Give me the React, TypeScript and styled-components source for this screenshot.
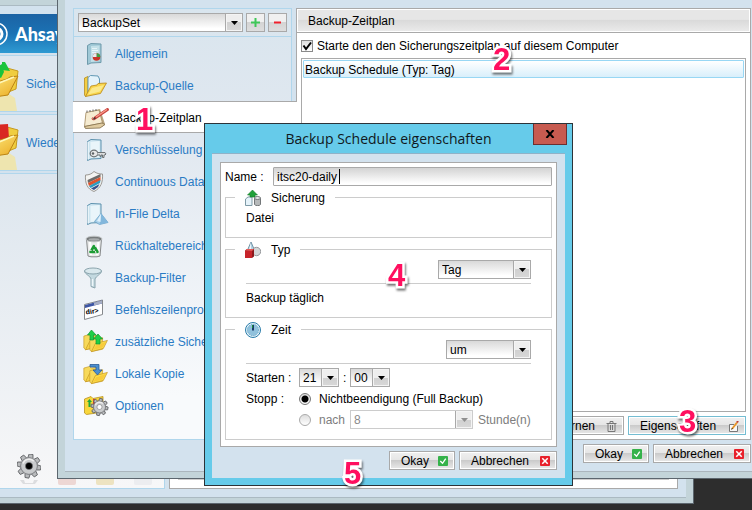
import React, { useId, useState } from "react";
import styled, { createGlobalStyle, css } from "styled-components";

const color = {
  frame: "#c3d4d9",
  frameEdge: "#5c666e",
  surface: "#d3e2ee",
  sky: "#b0d6ec",
  line: "#a9a9a9",
  softLine: "#cccccc",
  link: "#2a7bc4",
};

const GlobalStyle = createGlobalStyle`
  * { box-sizing: border-box; }
  body {
    margin: 0;
    background: #2d2d2d;
    color: #000;
    font: 12px/16px "Liberation Sans", Arial, sans-serif;
  }
  button, input, select { font: inherit; color: inherit; margin: 0; }
`;

const Desktop = styled.div`
  position: relative;
  min-height: 100vh;
  overflow: hidden;
`;

/* ---------- windows ---------- */

const MainWindow = styled.div`
  position: absolute;
  inset: -1px 58px 6px -60px;
  display: flex;
  padding: 5px 7px;
  border: 1px solid ${color.frameEdge};
  background: ${color.frame};
`;

const MainBody = styled.div`
  flex: 1;
  display: flex;
  flex-direction: column;
  gap: 2px;
  padding: 8px;
  background: ${color.surface};
  border: solid #abbac2;
  border-width: 1px 0;
`;

const Banner = styled.header`
  display: flex;
  align-items: center;
  gap: 7px;
  height: 39px;
  padding-left: 28px;
  background: linear-gradient(#1c63a4, #1b72b4 50%, #2e9ad2);
  color: #fff;
  font: 900 18px/24px Lato, sans-serif;
`;

const MainColumns = styled.div`
  flex: 1;
  display: grid;
  grid-template-columns: 209px 1fr;
  gap: 4px;
`;

const MainNav = styled.nav`
  display: flex;
  flex-direction: column;
  gap: 2px;
`;

const MainNavItem = styled.a`
  display: flex;
  align-items: center;
  gap: 7px;
  height: 57px;
  padding-left: 14px;
  border: 1px solid ${color.sky};
  background: #dee7ef;
  color: ${color.link};
  text-decoration: none;
  white-space: nowrap;
`;

const MainNavRest = styled.div`
  flex: 1;
  display: flex;
  align-items: flex-end;
  gap: 14px;
  padding-left: 60px;
  border: 1px solid ${color.sky};
  background: linear-gradient(#dde6ee, #f7f7f8);
`;

const MainContent = styled.div`
  display: flex;
  padding: 8px;
  border: 1px solid ${color.line};
  background: #fff;
`;

const MainContentList = styled.div`
  flex: 1;
  border: 1px solid ${color.softLine};
`;

const SettingsWindow = styled.div`
  position: absolute;
  isolation: isolate;
  inset: 0 -15px 31px 57px;
  display: flex;
  padding: 0 7px 6px;
  border: solid ${color.frameEdge};
  border-width: 0 1px 1px;
  background: ${color.frame};
`;

const SettingsBody = styled.div`
  flex: 1;
  display: flex;
  flex-direction: column;
  gap: 4px;
  padding: 8px;
  border-bottom: 1px solid #abb6bd;
  background: ${color.surface};
`;

const SettingsColumns = styled.div`
  flex: 1;
  display: grid;
  grid-template-columns: 219px 1fr;
  gap: 4px;
`;

/* ---------- sidebar ---------- */

const Sidebar = styled.aside`
  border: 1px solid ${color.sky};
  background: linear-gradient(#d9e5ee, #e1e8f0 30%, #f8fafc 90%);
`;

const SetPicker = styled.div`
  display: flex;
  align-items: center;
  gap: 3px;
  height: 28px;
  padding: 0 4px;
  border-bottom: 1px solid ${color.sky};
`;

const Tab = styled.a<{ $active?: boolean }>`
  position: relative;
  display: flex;
  align-items: center;
  gap: 8px;
  height: 32px;
  padding: 2px 0 0 9px;
  color: ${color.link};
  text-decoration: none;
  white-space: nowrap;
  svg { flex: none; overflow: visible; }
  ${(p) =>
    p.$active &&
    css`
      z-index: 1;
      margin: 0 -6px 0 -1px;
      border: solid ${color.line};
      border-width: 1px 0;
      padding-left: 10px;
      background: #fff;
      color: #000;
    `}
`;

/* ---------- controls ---------- */

const bevel = css`
  background: linear-gradient(#f0f0f0, #e6e6e6 45%, #cbcbcb 50%, #e9e9e9);
  box-shadow: inset 0 0 0 1px #fff;
`;

const Button = styled.button<{ $width: number; $focused?: boolean }>`
  display: flex;
  align-items: center;
  justify-content: space-between;
  min-width: ${(p) => p.$width}px;
  height: 19px;
  padding: 1px 6px 0 11px;
  border: 1px solid ${(p) => (p.$focused ? "#74bdd2" : color.line)};
  white-space: nowrap;
  ${bevel}
`;

const SquareButton = styled.button<{ $tint: string }>`
  display: grid;
  place-items: center;
  width: 19px;
  height: 19px;
  padding: 0;
  border: 1px solid ${color.line};
  color: ${(p) => p.$tint};
  background: linear-gradient(#f0f0f0 50%, #d4d4d4 50%, #dedede);
`;

const ComboBox = styled.div<{ $width?: number }>`
  display: grid;
  grid-template-columns: 1fr 17px;
  flex: ${(p) => (p.$width ? "none" : "1")};
  width: ${(p) => (p.$width ? `${p.$width}px` : "auto")};
  height: 19px;
  border: 1px solid ${color.line};
  background: linear-gradient(#d9d9d9, #fff 85%);
  &:has(select:disabled) {
    border-color: ${color.softLine};
    background: #fff;
    color: #8a8a8a;
  }
`;

const ComboSelect = styled.select`
  grid-area: 1 / 1 / 2 / 3;
  appearance: none;
  min-width: 0;
  padding: 1px 0 0 3px;
  border: 0;
  background: none;
  &:disabled { opacity: 1; color: #8a8a8a; }
`;

const ComboArrow = styled.span`
  grid-area: 1 / 2;
  display: grid;
  place-items: center;
  pointer-events: none;
  border-left: 1px solid ${color.line};
  background: linear-gradient(#eee 50%, #d0d0d0 50%, #d8d8d8);
  box-shadow: inset 0 0 0 1px #f4f4f4;
`;

const Check = styled.input`
  appearance: none;
  width: 12px;
  height: 12px;
  border: 1px solid #8a8a8a;
  background: linear-gradient(#ddd, #fff);
  &:checked {
    background: url("data:image/svg+xml,%3Csvg xmlns='http://www.w3.org/2000/svg' viewBox='0 0 10 10'%3E%3Cpath d='M1.5 4.5 4 8 9 1.5' fill='none' stroke='%23000' stroke-width='2'/%3E%3C/svg%3E")
      center / 10px 10px, linear-gradient(#ddd, #fff);
  }
`;

const Radio = styled.input`
  appearance: none;
  width: 12px;
  height: 12px;
  border: 1px solid #777;
  border-radius: 50%;
  background: linear-gradient(#ddd, #fff);
  &:checked {
    background: radial-gradient(circle, #000 3px, transparent 4px), linear-gradient(#ddd, #fff);
  }
  &:disabled { border-color: #aaa; }
`;

const TextBox = styled.input`
  flex: 1;
  min-width: 0;
  height: 19px;
  padding: 1px 3px 0;
  border: 1px solid ${color.line};
  border-radius: 1px;
  outline: none;
  caret-color: transparent;
  background:
    linear-gradient(#000, #000) 65px center / 1px 15px no-repeat,
    linear-gradient(#d3d3d3, #fff 90%);
`;

/* ---------- settings content ---------- */

const Panel = styled.section`
  display: flex;
  flex-direction: column;
  border: 1px solid ${color.line};
  background: #fff;
`;

const PanelTitle = styled.h1`
  height: 24px;
  margin: 0;
  padding-left: 11px;
  border-bottom: 1px solid ${color.line};
  background: linear-gradient(#e6e6e6 45%, #dadada 50%, #ebebeb);
  box-shadow: inset 0 0 0 1px #fff;
  font: inherit;
  line-height: 24px;
`;

const EnableRow = styled.label`
  display: flex;
  align-items: center;
  gap: 4px;
  height: 25px;
  padding: 1px 0 0 4px;
`;

const ScheduleList = styled.ul`
  flex: 1;
  margin: 0 4px;
  padding: 1px;
  border: 1px solid ${color.line};
  list-style: none;
`;

const ScheduleRow = styled.li`
  height: 18px;
  padding-left: 1px;
  border: 1px solid #98d7f4;
  border-radius: 1px;
  background: linear-gradient(#fff, #d9effb);
  line-height: 18px;
`;

const ButtonRow = styled.div<{ $pad?: boolean }>`
  display: flex;
  justify-content: flex-end;
  gap: 4px;
  padding: ${(p) => (p.$pad ? "4px" : "0")};
`;

/* ---------- dialog ---------- */

const Dialog = styled.div`
  position: absolute;
  left: 204px;
  top: 123px;
  width: 369px;
  padding: 0 7px 7px;
  border: 1px solid #2c3338;
  background: #66cbea;
`;

const DialogTitleBar = styled.header`
  display: grid;
  grid-template-columns: 1fr;
  height: 29px;
  margin: 0 -2px;
`;

const DialogTitle = styled.h2`
  grid-area: 1 / 1;
  margin: 0;
  color: #101820;
  font: 14px/29px "Open Sans", sans-serif;
  text-align: center;
`;

const CloseButton = styled.button`
  grid-area: 1 / 1;
  justify-self: end;
  display: grid;
  place-items: center;
  width: 34px;
  height: 21px;
  padding: 0;
  border: 1px solid #6b2f30;
  border-top: 0;
  background: #c75b50;
`;

const DialogBody = styled.form`
  display: flex;
  flex-direction: column;
  gap: 4px;
  padding: 8px;
  border-top: 1px solid #8fb2c8;
  background: ${color.surface};
`;

const DialogPanel = styled.div`
  display: flex;
  flex-direction: column;
  gap: 2px;
  padding: 4px 4px 6px;
  border: 1px solid ${color.line};
  background: #fff;
`;

const NameRow = styled.label`
  display: grid;
  grid-template-columns: 48px 1fr;
  align-items: center;
`;

const Group = styled.fieldset`
  min-width: 0;
  margin: 0;
  padding: 2px 20px 10px;
  border: 1px solid ${color.softLine};
`;

const GroupLegend = styled.legend`
  display: flex;
  align-items: center;
  gap: 10px;
  height: 18px;
  margin-left: -11px;
  padding: 2px 10px 0;
`;

const GroupText = styled.p`
  margin: 0;
  line-height: 20px;
  height: 19px;
`;

const SelectRow = styled.div`
  display: flex;
  justify-content: flex-end;
`;

const Rule = styled.hr`
  margin: 4px 0;
  border: 0;
  border-top: 1px solid ${color.softLine};
`;

const TimeGrid = styled.div`
  display: grid;
  grid-template-columns: 53px 1fr;
  grid-auto-rows: 19px;
  row-gap: 2px;
  align-items: center;
`;

const TimeCell = styled.div<{ $gap: number; $muted?: boolean }>`
  grid-column: 2;
  display: flex;
  align-items: center;
  gap: ${(p) => p.$gap}px;
  white-space: nowrap;
  color: ${(p) => (p.$muted ? "#7d7d7d" : "inherit")};
`;

const RadioLabel = styled.label`
  display: flex;
  align-items: center;
  gap: 8px;
`;

const StepMark = styled.span<{ $x: number; $y: number }>`
  position: absolute;
  left: ${(p) => p.$x}px;
  top: ${(p) => p.$y}px;
  color: #ff0f5f;
  font: bold 31px/32px "Liberation Sans", Arial, sans-serif;
  -webkit-text-stroke: 5px #fff;
  paint-order: stroke fill;
  filter: drop-shadow(1px 2px 1px rgba(0, 0, 0, 0.55));
  pointer-events: none;
`;

/* ---------- drawings ---------- */

const Folder = ({ x = 0, y = 0, s = 1 }: { x?: number; y?: number; s?: number }) => (
  <g transform={`translate(${x} ${y}) scale(${s})`}>
    <path d="M1 6 8 4l2 2 7-1v14L3 22 1 20z" fill="#f7d95a" stroke="#c59a27" strokeWidth=".8" />
    <path d="M3 22 8 12l15-4-5 10z" fill="#fbe04c" stroke="#c08c1a" strokeWidth=".8" />
    <path d="M5 20 9 14l12-4-4 7z" fill="#f5b92e" opacity=".55" />
  </g>
);

const Page = () => (
  <>
    <path d="M4.500 3.500 8 1.500l10 .5v18.500l-10 .5-3.500 1.500z" fill="#cfe6f1" stroke="#5c91ad" />
    <path d="M7.500 4 16.500 3v16l-9 1z" fill="#e9f5fa" />
    <path d="M5 4v17.500" stroke="#fff" />
  </>
);

const Gear = ({ cx, cy, r, hole = "#fff" }: { cx: number; cy: number; r: number; hole?: string }) => (
  <g transform={`translate(${cx} ${cy})`}>
    {Array.from({ length: 8 }, (_, i) => (
      <path
        key={i}
        transform={`rotate(${i * 45 + 10})`}
        d={`M${-r * 0.22} ${-r * 0.65} L${-r * 0.16} ${-r} H${r * 0.16} L${r * 0.22} ${-r * 0.65}z`}
        fill="#b9bbbd"
        stroke="#636568"
        strokeWidth=".9"
      />
    ))}
    <circle r={r * 0.7} fill="#c4c6c8" stroke="#77797c" strokeWidth=".8" />
    <circle r={r * 0.6} fill="#c9cbcd" />
    <path d={`M${-r * 0.5} ${-r * 0.2}A${r * 0.54} ${r * 0.54} 0 0 1 ${r * 0.4} ${-r * 0.4}`} fill="none" stroke="#eee" strokeWidth="1.500" />
    <circle r={r * 0.3} fill={hole} stroke="#77797c" strokeWidth=".6" />
  </g>
);

const tabIcons: Record<string, React.ReactNode> = {
  general: (
    <>
      <path d="M4.500 3.500 8 1.500l10 .5v18.500l-10 .5-3.500 1.500z" fill="#9fc8d6" stroke="#6f9aab" />
      <path d="M8 4 16.500 3.500v15.500L8 20z" fill="#c3e0e8" />
      <path d="M9 6.500h5M9 8.500h6M9 10.500h4" stroke="#e6f4f8" />
      <circle cx="13.500" cy="15" r="3.800" fill="#c93428" />
      <path d="M13.500 15v-3.800a3.800 3.800 0 0 1 3.800 3.800z" fill="#3da044" />
      <path d="M13.500 15H9.700a3.800 3.800 0 0 1 3.800-3.800z" fill="#e6ebee" />
    </>
  ),
  source: (
    <>
      <path d="M1.500 4 5 2.500v18L2.500 22.500l-1-1.500z" fill="#f4cd42" stroke="#b88d20" strokeWidth=".8" />
      <path d="M5 3.500 7.500 1.500 15 2l1.500 3v14L5 20z" fill="#e4f3fb" stroke="#6299b5" />
      <path d="M2.500 22.500 8 12l6-1 1-1.500 8.500-.5-6 10.500z" fill="#f9d54a" stroke="#b8861b" strokeWidth=".8" />
      <path d="M5 20.500 9 14l12-3-4 6.500z" fill="#fbe98c" />
    </>
  ),
  schedule: (
    <>
      <path d="M3 7 17 3l5 15-3 3L1.500 22z" fill="#b9a681" />
      <path d="M3 6.500 16 4l3.500 13L1.500 20.500z" fill="#f6ecd2" stroke="#a48b62" strokeWidth=".8" />
      <path d="M1.500 20.500 19 17l3 1.500-5 3.500-14.500.5z" fill="#dfcba0" stroke="#83704d" strokeWidth=".8" />
      <path d="M4 6.500v-2M7 6V4M10 5.500v-2M13 5V3" stroke="#666" />
      <path d="M10 11.500c-2 1-1 3 2 2" stroke="#cf3b35" fill="none" />
      <path d="M12 12 24.500 3.500" stroke="#c9423d" strokeWidth="3" strokeLinecap="round" />
      <path d="M13 11 24 3.500" stroke="#f79a8b" strokeWidth="1.500" />
      <path d="m9.500 13.500 2-2.500 1.500 2z" fill="#4a3632" />
    </>
  ),
  encryption: (
    <>
      <Page />
      <ellipse cx="11" cy="15.500" rx="3.800" ry="3.300" fill="#e8e8e8" stroke="#6d7275" strokeWidth="1.300" />
      <circle cx="10" cy="15.500" r="1.200" fill="#5d6265" />
      <path d="M14.500 14.500H22l1 1.500-1 1h-1v2.500h-1.500V17H18v1.500h-1V17h-2.500" fill="#dadcdd" stroke="#6d7275" />
    </>
  ),
  shield: (
    <>
      <path d="M11 1.500c3 2 5 2.500 8.500 2.500C20 12 18 18 11 21.500 4 19 2 13 2.500 5 6 5 8.500 4 11 1.500z" fill="#f3f3f1" stroke="#9b9894" />
      <path d="m4.500 10 13-6v3L5 13z" fill="#6d6a69" />
      <path d="m5 13 12.500-6v3.500L6 16z" fill="#e0532e" />
      <path d="M6 16 17.500 10l-.5 3L7.500 18z" fill="#2b9bc1" />
      <path d="m8 18.500 8.500-4.500-1.500 3-4 3z" fill="#34528e" />
    </>
  ),
  delta: (
    <>
      <Page />
      <path d="m18 11.500-6.500 8 5 3 8.500-2z" fill="#a9d0e9" stroke="#6ba2c6" strokeWidth=".8" />
      <path d="m18 11.500-1.500 11L25 20.500z" fill="#82b7dc" />
      <path d="m18 11.500-4 7.500 3.500 1z" fill="#e0f1fb" />
    </>
  ),
  bin: (
    <>
      <path d="M3.500 5h15l-1.500 17-3 .8H8L5 22z" fill="#ebecec" stroke="#858889" />
      <path d="M6 7h2l1 14H7zM14.500 7h2L15 21h-2z" fill="#fff" />
      <ellipse cx="11" cy="5" rx="8" ry="2.800" fill="#777b7c" stroke="#bfc3c4" />
      <ellipse cx="11" cy="5.500" rx="5.500" ry="1.300" fill="#a8acad" />
      <path d="M11 12 14.500 18h-7z" fill="none" stroke="#1c9c34" strokeWidth="2.600" strokeLinejoin="round" />
      <path d="m12 10.500 1 2.500M6.500 16l2 .5M13 19.500l-.5-2.500" stroke="#ebecec" />
    </>
  ),
  filter: (
    <>
      <path d="M1.500 5c0 3 6 5 6.500 8v7.500l4 1.500v-9c1-3 6.500-5 6.500-8z" fill="#c3d9e0" stroke="#8aa4ad" />
      <ellipse cx="10" cy="5" rx="8.500" ry="3" fill="#d9e8ed" stroke="#8aa4ad" />
      <path d="M9.500 13v7" stroke="#eef6f9" strokeWidth="1.500" />
    </>
  ),
  command: (
    <>
      <path d="M1.500 6.500 19.500 2v14.500l-18 5z" fill="#fff" stroke="#85888c" />
      <path d="M2 7 19 2.500v3L2 10z" fill="#3e57a5" />
      <path d="M11 4.700 19 2.500v3l-8 2z" fill="#a9b0c5" />
      <text x="3" y="16.500" transform="rotate(-8 3 16.500)" fontFamily="Liberation Sans, sans-serif" fontSize="7" fontWeight="bold">dir&gt;</text>
    </>
  ),
  extra: (
    <>
      <Folder x={0} y={1} s={0.85} />
      <Folder x={6} y={4} s={0.8} />
      <path d="M8.500 0 13 5h-2.500v5H7V5H4.500zM15 4l4.500 5H17v5h-4V9h-2.500z" fill="#1fcf46" stroke="#149732" strokeWidth=".7" />
    </>
  ),
  local: (
    <>
      <Folder x={0} y={1} s={0.85} />
      <Folder x={6} y={4} s={0.8} />
      <path d="M7 5V2.500h9V8h3l-4.500 5L10 8h3V5z" fill="#4a8fd0" stroke="#285b98" strokeWidth=".8" />
    </>
  ),
  options: (
    <>
      <path d="M1.500 5 8 2.500l2 2L20 2.500V18L3.500 20.500l-2-1.500z" fill="#f8d63c" stroke="#b8901e" strokeWidth=".8" />
      <path d="M6.500 5 9 8H7.500v5h-2V8H4z" fill="#1faa3c" />
      <path d="M11 5v5" stroke="#d9392c" strokeWidth="2" />
      <Gear cx={16.500} cy={13} r={8.500} />
    </>
  ),
};

const groupIcons: Record<string, React.ReactNode> = {
  backup: (
    <>
      <path d="M.5 9 3 7h4v8.500H.5z" fill="#e6f3fa" stroke="#7e9aa6" />
      <path d="M9.500 8v6.500c1 1.500 5.500 1.500 6 0V8" fill="#b6b9ba" stroke="#737779" />
      <ellipse cx="12.500" cy="8" rx="3" ry="1.500" fill="#e3e5e6" stroke="#737779" />
      <path d="m7.500 0 5 5H10v2H5V5H2.500z" fill="#20a13a" stroke="#15782a" strokeWidth=".6" />
    </>
  ),
  type: (
    <>
      <path d="M6 0 2.500 8h7z" fill="#b4d2e2" stroke="#587f94" strokeWidth=".8" />
      <path d="M6 0v8H4z" fill="#eff8fc" />
      <circle cx="11.500" cy="9.500" r="4.200" fill="#d4d6d8" stroke="#85888b" strokeWidth=".8" />
      <path d="M0 8.500 2 7h7v7.500L7 16H0z" fill="#8d191d" />
      <path d="M0 9h7v7H0z" fill="#c7242a" />
      <path d="M0 8.500 2 7h7L7 9z" fill="#e55a58" />
    </>
  ),
  time: (
    <>
      <circle cx="8" cy="8" r="7.500" fill="#e8f5fb" stroke="#287ba9" />
      <circle cx="8" cy="8" r="5.700" fill="#90c1dc" stroke="#5f9fc2" strokeDasharray="1 1" />
      <path d="M8 3v5.500" stroke="#1b3c6d" strokeWidth="2" />
      <path d="M7.500 3v3" stroke="#1d8b35" />
    </>
  ),
};

const GroupIcon = ({ name }: { name: string }) => (
  <svg width="16" height="16" viewBox="0 0 16 16" aria-hidden="true">{groupIcons[name]}</svg>
);

const OkIcon = () => (
  <svg width="10" height="10" viewBox="0 0 11 11" aria-hidden="true">
    <rect width="11" height="11" rx="1" fill="#35b24a" />
    <path d="M2.500 5.500 5 8l3.500-5" fill="none" stroke="#fff" strokeWidth="1.500" />
  </svg>
);

const CancelIcon = () => (
  <svg width="10" height="10" viewBox="0 0 11 11" aria-hidden="true">
    <rect width="11" height="11" rx="1" fill="#e8202a" />
    <path d="m2.500 2.500 6 6m0-6-6 6" stroke="#fff" strokeWidth="1.700" />
  </svg>
);

const TrashIcon = () => (
  <svg width="11" height="11" viewBox="0 0 11 11" aria-hidden="true">
    <path d="M.5 2.500h10M4 2V.5h3V2M2 3v7.500h7V3M4.500 4v5M6.500 4v5" fill="none" stroke="#777" />
  </svg>
);

const EditIcon = () => (
  <svg width="11" height="11" viewBox="0 0 11 11" aria-hidden="true">
    <path d="M9.500 5v5.500h-8v-7H6" fill="#f8f8f8" stroke="#777" />
    <path d="m4 8 5-6.500" stroke="#e8962a" strokeWidth="2" />
    <path d="m9 1.500 1-1.500" stroke="#c03b30" strokeWidth="2" />
    <path d="m3.500 8.500 1-1.500" stroke="#333" />
  </svg>
);

const BigFolder = ({ arrow, id }: { arrow: string; id: string }) => (
  <svg width="48" height="55" viewBox="0 0 48 55" aria-hidden="true">
    <defs>
      <linearGradient id={id} x1="0" y1="0" x2="1" y2="1">
        <stop offset="0" stopColor="#fff08a" />
        <stop offset="1" stopColor="#e9a61a" />
      </linearGradient>
    </defs>
    <path d="M8 55V42l30-4 6 4 2 13z" fill="#f8e583" opacity=".6" />
    <path d="M10 18 36 12l11 3-2 18-30 12z" fill="#f0cd3f" stroke="#c79b20" />
    {arrow === "up" ? (
      <path d="m25 12 6-4 2 8-3 6-5-2z" fill="#19c43c" />
    ) : (
      <path d="m24 10 13-1 1 14-8 7-8-4z" fill="#d92722" />
    )}
    {arrow === "up" && <path d="m31 6 3 0 5 9-8-1z" fill="#19c43c" />}
    <path d="m10 43 16-17 10-3 3-2 8-1-10 19z" fill={`url(#${id})`} stroke="#bb8413" />
    <path d="m14 41 14-14 15-6" fill="none" stroke="#fff7b8" strokeWidth="1.500" />
  </svg>
);

const BannerMark = () => (
  <svg width="24" height="24" viewBox="0 0 24 24" aria-hidden="true">
    <circle cx="12" cy="12" r="11" fill="none" stroke="#fff" strokeWidth="1.500" />
    <circle cx="12" cy="12" r="6" fill="none" stroke="#fff" strokeWidth="3" />
  </svg>
);

const DockGear = () => (
  <svg width="24" height="34" viewBox="0 0 24 34" aria-hidden="true">
    <path d="M3 26h4l1 3h8l1-3h4l-3 4H6z" fill="#b4b6b8" opacity=".4" />
    <Gear cx={12} cy={12} r={12} hole="#000" />
  </svg>
);

const DockIcon = ({ body, tint }: { body: string; tint: string }) => (
  <svg width="24" height="34" viewBox="0 0 24 34" aria-hidden="true">
    <rect x="2" y="3" width="20" height="20" rx="3" fill={body} />
    <rect x="3" y="23" width="18" height="8" rx="2" fill={tint} opacity=".5" />
  </svg>
);

/* ---------- composed pieces ---------- */

function Combo({ label, options, width, disabled, id }: {
  label?: string; options: string[]; width?: number; disabled?: boolean; id?: string;
}) {
  return (
    <ComboBox $width={width}>
      <ComboSelect aria-label={label} id={id} disabled={disabled} defaultValue={options[0]}>
        {options.map((o) => <option key={o}>{o}</option>)}
      </ComboSelect>
      <ComboArrow>
        <svg width="7" height="4" viewBox="0 0 7 4" aria-hidden="true">
          <path d="M0 0h7L3.500 4z" fill={disabled ? "#8f8f8f" : "#000"} />
        </svg>
      </ComboArrow>
    </ComboBox>
  );
}

const tabs = [
  ["general", "Allgemein"],
  ["source", "Backup-Quelle"],
  ["schedule", "Backup-Zeitplan"],
  ["encryption", "Verschlüsselung"],
  ["shield", "Continuous Data Protection"],
  ["delta", "In-File Delta"],
  ["bin", "Rückhaltebereich"],
  ["filter", "Backup-Filter"],
  ["command", "Befehlszeilenprogramm"],
  ["extra", "zusätzliche Sicherung"],
  ["local", "Lokale Kopie"],
  ["options", "Optionen"],
];

function PropertiesDialog() {
  const [name, setName] = useState("itsc20-daily");
  const startId = useId();
  return (
    <Dialog role="dialog" aria-label="Backup Schedule eigenschaften">
      <DialogTitleBar>
        <DialogTitle>Backup Schedule eigenschaften</DialogTitle>
        <CloseButton type="button" aria-label="Schließen">
          <svg width="10" height="8" viewBox="0 0 10 8" aria-hidden="true">
            <path d="m1.500 0 7 8m0-8-7 8" stroke="#000" strokeWidth="2" />
          </svg>
        </CloseButton>
      </DialogTitleBar>
      <DialogBody onSubmit={(e) => e.preventDefault()}>
        <DialogPanel>
          <NameRow>
            Name :
            <TextBox value={name} autoFocus onChange={(e) => setName(e.target.value)} />
          </NameRow>
          <Group>
            <GroupLegend><GroupIcon name="backup" />Sicherung</GroupLegend>
            <GroupText>Datei</GroupText>
          </Group>
          <Group>
            <GroupLegend><GroupIcon name="type" />Typ</GroupLegend>
            <SelectRow><Combo label="Typ" width={93} options={["Tag", "Woche", "Monat"]} /></SelectRow>
            <Rule />
            <GroupText>Backup täglich</GroupText>
          </Group>
          <Group>
            <GroupLegend><GroupIcon name="time" />Zeit</GroupLegend>
            <SelectRow><Combo label="Zeit" width={85} options={["um", "alle"]} /></SelectRow>
            <Rule />
            <TimeGrid>
              <label htmlFor={startId}>Starten :</label>
              <TimeCell $gap={4}>
                <Combo id={startId} width={40} options={["21", "22", "23"]} />
                :
                <Combo label="Minuten" width={40} options={["00", "15", "30"]} />
              </TimeCell>
              <span>Stopp :</span>
              <TimeCell $gap={4}>
                <RadioLabel><Radio type="radio" name="stop" defaultChecked />Nichtbeendigung (Full Backup)</RadioLabel>
              </TimeCell>
              <TimeCell $gap={5} $muted>
                <RadioLabel><Radio type="radio" name="stop" disabled />nach</RadioLabel>
                <Combo label="Stunden" width={123} options={["8"]} disabled />
                Stunde(n)
              </TimeCell>
            </TimeGrid>
          </Group>
        </DialogPanel>
        <ButtonRow>
          <Button type="submit" $width={66}>Okay<OkIcon /></Button>
          <Button type="button" $width={98}>Abbrechen<CancelIcon /></Button>
        </ButtonRow>
      </DialogBody>
    </Dialog>
  );
}

export default function App() {
  return (
    <>
      <GlobalStyle />
      <Desktop>
        <MainWindow>
          <MainBody>
            <Banner><BannerMark />Ahsay</Banner>
            <MainColumns>
              <MainNav>
                <MainNavItem href="#sicherung"><BigFolder arrow="up" id="fold-a" />Sicherung</MainNavItem>
                <MainNavItem href="#wiederherstellung"><BigFolder arrow="down" id="fold-b" />Wiederherstellung</MainNavItem>
                <MainNavRest>
                  <DockGear />
                  <DockIcon body="#2f7a4c" tint="#e3b7b0" />
                  <DockIcon body="#e0c060" tint="#e3d08a" />
                  <DockIcon body="#b0b4b8" tint="#e2e4e8" />
                </MainNavRest>
              </MainNav>
              <MainContent><MainContentList /></MainContent>
            </MainColumns>
          </MainBody>
        </MainWindow>

        <SettingsWindow>
          <SettingsBody>
            <SettingsColumns>
              <Sidebar>
                <SetPicker>
                  <Combo label="Backup-Set" options={["BackupSet"]} />
                  <SquareButton $tint="#3fc758" aria-label="Hinzufügen">
                    <svg width="9" height="9" viewBox="0 0 9 9"><path d="M4.500 0v9M0 4.500h9" stroke="currentColor" strokeWidth="2" /></svg>
                  </SquareButton>
                  <SquareButton $tint="#f0202c" aria-label="Löschen">
                    <svg width="9" height="9" viewBox="0 0 9 9"><path d="M1 4.500h7" stroke="currentColor" strokeWidth="2" /></svg>
                  </SquareButton>
                </SetPicker>
                <nav>
                  {tabs.map(([icon, label]) => (
                    <Tab key={icon} href={`#${icon}`} $active={icon === "schedule"}>
                      <svg width="24" height="24" viewBox="0 0 24 24" aria-hidden="true">{tabIcons[icon]}</svg>
                      {label}
                    </Tab>
                  ))}
                </nav>
              </Sidebar>
              <Panel>
                <PanelTitle>Backup-Zeitplan</PanelTitle>
                <EnableRow>
                  <Check type="checkbox" defaultChecked />
                  Starte den den Sicherungszeitplan auf diesem Computer
                </EnableRow>
                <ScheduleList>
                  <ScheduleRow>Backup Schedule (Typ: Tag)</ScheduleRow>
                </ScheduleList>
                <ButtonRow $pad>
                  <Button type="button" $width={93}>Entfernen<TrashIcon /></Button>
                  <Button type="button" $width={118} $focused>Eigenschaften<EditIcon /></Button>
                </ButtonRow>
              </Panel>
            </SettingsColumns>
            <ButtonRow>
              <Button type="button" $width={66}>Okay<OkIcon /></Button>
              <Button type="button" $width={98}>Abbrechen<CancelIcon /></Button>
            </ButtonRow>
          </SettingsBody>
        </SettingsWindow>

        <PropertiesDialog />

        <StepMark $x={136} $y={104}>1</StepMark>
        <StepMark $x={493} $y={44}>2</StepMark>
        <StepMark $x={679} $y={406}>3</StepMark>
        <StepMark $x={388} $y={260}>4</StepMark>
        <StepMark $x={344} $y={458}>5</StepMark>
      </Desktop>
    </>
  );
}
